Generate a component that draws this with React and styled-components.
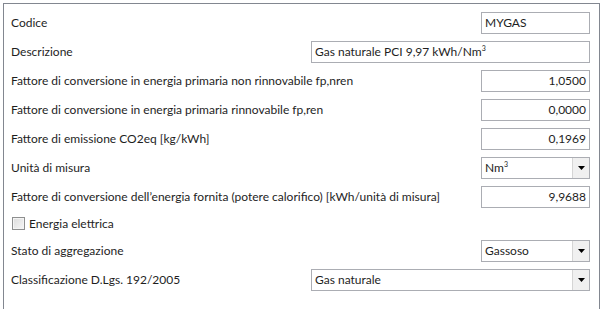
import React from "react";
import styled, { createGlobalStyle } from "styled-components";

const Global = createGlobalStyle`
  html, body { margin: 0; padding: 0; background: #ffffff; }
  body { font-family: Lato, "Open Sans", "DejaVu Sans", sans-serif; font-size: 12px; color: #1e1e1e; }
`;

const Frame = styled.div`
  margin: 3px 0 0 3px;
  width: 597px;
  height: 320px;
  border: 1px solid #828790;
  border-bottom: none;
  box-sizing: border-box;
  padding: 4px 9px 0 7px;
`;

const Row = styled.div`
  display: flex;
  align-items: ${(p) => (p.$center ? "center" : "flex-start")};
  justify-content: space-between;
  height: ${(p) => p.$h || 29}px;
  padding-top: ${(p) => (p.$center ? 0 : 4)}px;
  box-sizing: border-box;
`;

const Label = styled.span`
  line-height: 22px;
  white-space: nowrap;
`;

const Input = styled.div`
  width: ${(p) => p.$w}px;
  height: 22px;
  box-sizing: border-box;
  border: 1px solid #abadb3;
  background: #fff;
  padding: 0 3px 0 3px;
  line-height: 20px;
  text-align: ${(p) => (p.$right ? "right" : "left")};
  white-space: nowrap;
  overflow: hidden;
`;

const Select = styled.div`
  width: ${(p) => p.$w}px;
  height: 22px;
  box-sizing: border-box;
  border: 1px solid #abadb3;
  background: #fff;
  display: flex;
  align-items: stretch;
`;

const SelectText = styled.span`
  flex: 1;
  padding-left: 3px;
  line-height: 20px;
`;

const DropButton = styled.span`
  width: 16px;
  border-left: 1px solid #d5d5d5;
  background: #f0f0f0;
  display: flex;
  align-items: center;
  justify-content: center;
`;

const Check = styled.span`
  width: 11px;
  height: 11px;
  border: 1px solid #8e8f8f;
  background: linear-gradient(135deg, #dcdcdc, #f6f6f6);
  box-shadow: inset 0 0 0 1px #f4f4f4;
  margin-left: 1px;
  margin-right: 4px;
  flex: none;
`;

const CheckLabel = styled.label`
  display: flex;
  align-items: center;
`;

const Sup = styled.sup`
  font-size: 7px;
  vertical-align: 5px;
  line-height: 0;
`;

const Arrow = () => (
  <svg width="7" height="4" viewBox="0 0 7 4">
    <path d="M0 0H7L3.5 4Z" fill="#000" />
  </svg>
);

const Drop = ({ w, children }) => (
  <Select $w={w}>
    <SelectText>{children}</SelectText>
    <DropButton>
      <Arrow />
    </DropButton>
  </Select>
);

export default function App() {
  return (
    <>
      <Global />
      <Frame>
        <Row>
          <Label>Codice</Label>
          <Input $w={109}>MYGAS</Input>
        </Row>
        <Row>
          <Label>Descrizione</Label>
          <Input $w={279}>
            Gas naturale PCI 9,97 kWh/Nm<Sup>3</Sup>
          </Input>
        </Row>
        <Row>
          <Label>Fattore di conversione in energia primaria non rinnovabile fp,nren</Label>
          <Input $w={109} $right>1,0500</Input>
        </Row>
        <Row>
          <Label>Fattore di conversione in energia primaria rinnovabile fp,ren</Label>
          <Input $w={109} $right>0,0000</Input>
        </Row>
        <Row>
          <Label>Fattore di emissione CO2eq [kg/kWh]</Label>
          <Input $w={109} $right>0,1969</Input>
        </Row>
        <Row>
          <Label>Unità di misura</Label>
          <Drop w={109}>
            Nm<Sup>3</Sup>
          </Drop>
        </Row>
        <Row>
          <Label>Fattore di conversione dell’energia fornita (potere calorifico) [kWh/unità di misura]</Label>
          <Input $w={109} $right>9,9688</Input>
        </Row>
        <Row $h={25} $center>
          <CheckLabel>
            <Check />
            Energia elettrica
          </CheckLabel>
        </Row>
        <Row>
          <Label>Stato di aggregazione</Label>
          <Drop w={109}>Gassoso</Drop>
        </Row>
        <Row>
          <Label>Classificazione D.Lgs. 192/2005</Label>
          <Drop w={279}>Gas naturale</Drop>
        </Row>
      </Frame>
    </>
  );
}
